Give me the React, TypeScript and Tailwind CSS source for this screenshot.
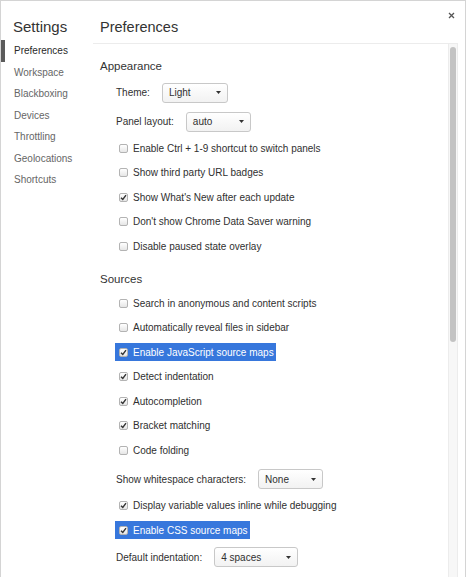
import React from "react";

const sidebarItems = [
  "Preferences",
  "Workspace",
  "Blackboxing",
  "Devices",
  "Throttling",
  "Geolocations",
  "Shortcuts",
];

function Checkbox({ checked }: { checked: boolean }) {
  return (
    <span className="w-[9px] h-[9px] shrink-0 rounded-[2px] border border-[#b3b3b3] bg-linear-to-b from-white to-[#e6e6e6] flex items-center justify-center">
      {checked && (
        <svg width="7" height="7" viewBox="0 0 7 7">
          <path d="M1 3.7 L2.8 5.5 L6 1.2" stroke="#333" strokeWidth="1.4" fill="none" />
        </svg>
      )}
    </span>
  );
}

function CheckRow({ label, checked = false, hl = false }: { label: string; checked?: boolean; hl?: boolean }) {
  return (
    <div className="h-[24.5px] flex items-center pl-[15px]">
      <div
        className={
          hl
            ? "h-[18px] flex items-center gap-[5px] pl-[4px] pr-[2px] bg-[#3777dc] text-white"
            : "h-[18px] flex items-center gap-[5px] pl-[4px] pr-[2px]"
        }
      >
        <Checkbox checked={checked} />
        <span className="whitespace-nowrap">{label}</span>
      </div>
    </div>
  );
}

function Select({ value, width }: { value: string; width: string }) {
  return (
    <div
      className={`${width} h-[20px] border border-[#c8c8c8] rounded-[3px] bg-linear-to-b from-white to-[#f2f2f2] flex items-center justify-between pl-[6px] pr-[6px]`}
    >
      <span>{value}</span>
      <svg width="5" height="3" viewBox="0 0 5 3">
        <path d="M0 0 H5 L2.5 3 Z" fill="#333" />
      </svg>
    </div>
  );
}

function SelectRow({ label, value, width }: { label: string; value: string; width: string }) {
  return (
    <div className="h-[29px] flex items-center gap-[12px] pl-[16px]">
      <span className="whitespace-nowrap">{label}</span>
      <Select value={value} width={width} />
    </div>
  );
}

export default function App() {
  return (
    <div className="w-[468px] h-[577px] bg-white overflow-hidden font-['Liberation_Sans',Arial,sans-serif] text-[10px] text-[#303030]">
      <div className="relative w-[466px] h-[577px] border-t border-l border-r border-[#d4d4d4] flex">
        {/* sidebar */}
        <div className="w-[92px] shrink-0 pt-[15px]">
          <div className="h-[22px] leading-[22px] pl-[12px] text-[15px] text-[#333]">Settings</div>
          <div className="mt-[2px]">
            {sidebarItems.map((item, i) => (
              <div
                key={item}
                className={
                  i === 0
                    ? "h-[21.5px] leading-[21.5px] border-l-4 border-[#5b5b5b] pl-[9px] text-[#2a2a2a]"
                    : "h-[21.5px] leading-[21.5px] border-l-4 border-transparent pl-[9px] text-[#666]"
                }
              >
                {item}
              </div>
            ))}
          </div>
        </div>

        {/* main */}
        <div className="flex-1 flex flex-col mr-[7px] min-w-0">
          <div className="h-[43px] shrink-0 border-b border-[#ececec] pt-[16px] pl-[7px]">
            <div className="text-[14.5px] leading-[20px] text-[#333]">Preferences</div>
          </div>
          <div className="flex-1 flex min-h-0">
            <div className="flex-1 pl-[7px]">
              <div className="mt-[10px] h-[24px] leading-[24px] text-[11.5px] text-[#333]">Appearance</div>
              <SelectRow label="Theme:" value="Light" width="w-[66px]" />
              <SelectRow label="Panel layout:" value="auto" width="w-[65px]" />
              <CheckRow label="Enable Ctrl + 1-9 shortcut to switch panels" />
              <CheckRow label="Show third party URL badges" />
              <CheckRow label="Show What's New after each update" checked />
              <CheckRow label="Don't show Chrome Data Saver warning" />
              <CheckRow label="Disable paused state overlay" />

              <div className="mt-[8.5px] h-[24px] leading-[24px] text-[11.5px] text-[#333]">Sources</div>
              <CheckRow label="Search in anonymous and content scripts" />
              <CheckRow label="Automatically reveal files in sidebar" />
              <CheckRow label="Enable JavaScript source maps" checked hl />
              <CheckRow label="Detect indentation" checked />
              <CheckRow label="Autocompletion" checked />
              <CheckRow label="Bracket matching" checked />
              <CheckRow label="Code folding" />
              <div className="mt-[2px]">
                <SelectRow label="Show whitespace characters:" value="None" width="w-[65px]" />
              </div>
              <CheckRow label="Display variable values inline while debugging" checked />
              <CheckRow label="Enable CSS source maps" checked hl />
              <SelectRow label="Default indentation:" value="4 spaces" width="w-[84px]" />
            </div>

            {/* scrollbar */}
            <div className="w-[10px] shrink-0 bg-[#f7f7f7] border-l border-r border-[#ececec] pt-[3px] flex justify-center">
              <div className="w-[6px] h-[295px] rounded-[3px] bg-[#c3c3c3]" />
            </div>
          </div>
        </div>

        {/* close button */}
        <div className="absolute top-[10px] right-[10px] w-[8px] h-[8px] flex items-center justify-center">
          <svg width="7" height="7" viewBox="0 0 7 7">
            <path d="M1 1 L6 6 M6 1 L1 6" stroke="#555" strokeWidth="1.3" />
          </svg>
        </div>
      </div>
    </div>
  );
}
